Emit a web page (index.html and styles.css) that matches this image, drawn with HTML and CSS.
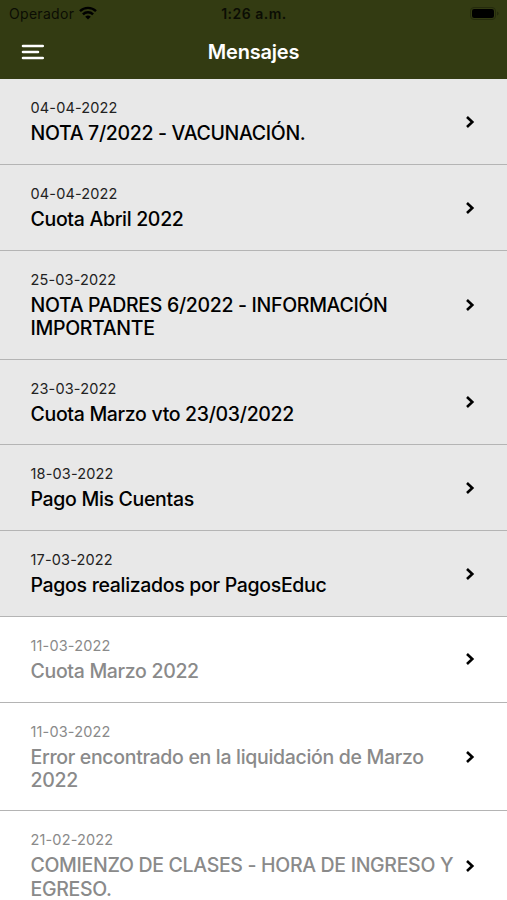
FILE: index.html
```html
<!DOCTYPE html>
<html lang="es">
  <head>
    <meta charset="UTF-8">
    <meta name="viewport" content="width=device-width, initial-scale=1">
    <title>Mensajes</title>
    <link rel="stylesheet" href="styles.css">
  </head>
  <body>
    <header class="header">
      <div class="status">
        <div class="carrier">
          <span class="carrier-name">Operador</span>
          <svg class="wifi" viewBox="0 0 18 14" width="18" height="14">
            <path d="M1 5.2 A11.3 11.3 0 0 1 17 5.2" />
            <path d="M3.9 8.3 A7.2 7.2 0 0 1 14.1 8.3" />
            <path class="dot" d="M9 13.6 L6.2 10.8 A4.2 4.2 0 0 1 11.8 10.8 Z" />
          </svg>
        </div>
        <span class="clock">1:26 a.m.</span>
        <svg class="battery" viewBox="0 0 29 13" width="29" height="13">
          <rect class="case" x="0.5" y="0.5" width="25" height="12" rx="3.5" />
          <rect x="2" y="2" width="22" height="9" rx="2.2" />
          <path class="cap" d="M27 4.5 Q28.6 5 28.6 6.5 Q28.6 8 27 8.5 Z" />
        </svg>
      </div>
      <div class="navbar">
        <svg class="menu" viewBox="0 0 23 16" width="23" height="16">
          <path d="M2 2 H21.8 M2 8 H17 M2 14 H21.8" />
        </svg>
        <h1 class="title">Mensajes</h1>
      </div>
    </header>
    <ul class="list">
      <li class="item">
        <div class="text"><p class="date">04-04-2022</p><p class="subject">NOTA 7/2022 - VACUNACIÓN.</p></div>
        <svg class="arrow" viewBox="0 0 10 14"><path d="M2 2 L7.3 7 L2 12" /></svg>
      </li>
      <li class="item">
        <div class="text"><p class="date">04-04-2022</p><p class="subject">Cuota Abril 2022</p></div>
        <svg class="arrow" viewBox="0 0 10 14"><path d="M2 2 L7.3 7 L2 12" /></svg>
      </li>
      <li class="item">
        <div class="text"><p class="date">25-03-2022</p><p class="subject">NOTA PADRES 6/2022 - INFORMACIÓN<br>IMPORTANTE</p></div>
        <svg class="arrow" viewBox="0 0 10 14"><path d="M2 2 L7.3 7 L2 12" /></svg>
      </li>
      <li class="item">
        <div class="text"><p class="date">23-03-2022</p><p class="subject">Cuota Marzo vto 23/03/2022</p></div>
        <svg class="arrow" viewBox="0 0 10 14"><path d="M2 2 L7.3 7 L2 12" /></svg>
      </li>
      <li class="item">
        <div class="text"><p class="date">18-03-2022</p><p class="subject">Pago Mis Cuentas</p></div>
        <svg class="arrow" viewBox="0 0 10 14"><path d="M2 2 L7.3 7 L2 12" /></svg>
      </li>
      <li class="item">
        <div class="text"><p class="date">17-03-2022</p><p class="subject">Pagos realizados por PagosEduc</p></div>
        <svg class="arrow" viewBox="0 0 10 14"><path d="M2 2 L7.3 7 L2 12" /></svg>
      </li>
      <li class="item read">
        <div class="text"><p class="date">11-03-2022</p><p class="subject">Cuota Marzo 2022</p></div>
        <svg class="arrow" viewBox="0 0 10 14"><path d="M2 2 L7.3 7 L2 12" /></svg>
      </li>
      <li class="item read">
        <div class="text"><p class="date">11-03-2022</p><p class="subject">Error encontrado en la liquidación de Marzo<br>2022</p></div>
        <svg class="arrow" viewBox="0 0 10 14"><path d="M2 2 L7.3 7 L2 12" /></svg>
      </li>
      <li class="item read">
        <div class="text"><p class="date">21-02-2022</p><p class="subject">COMIENZO DE CLASES - HORA DE INGRESO Y<br>EGRESO.</p></div>
        <svg class="arrow" viewBox="0 0 10 14"><path d="M2 2 L7.3 7 L2 12" /></svg>
      </li>
    </ul>
  </body>
</html>
```
FILE: styles.css
```css
body { margin: 0; height: 900px; overflow: hidden; background: #fff; font-family: Inter, "Liberation Sans", sans-serif; }
p, h1, ul { margin: 0; padding: 0; }

.header { height: 79px; background: #333b12; }
.status { display: grid; grid-template-columns: 1fr auto 1fr; align-items: center; height: 27px; padding: 0 8px 0 9px; color: #0b0d04; font-size: 14px; }
.carrier { display: flex; align-items: center; gap: 5px; }
.carrier-name { letter-spacing: 0.3px; }
.wifi { margin-bottom: 2px; }
.wifi path { fill: none; stroke: #000; stroke-width: 2.4; }
.wifi .dot { fill: #000; stroke: none; }
.clock { font-weight: 600; letter-spacing: 0.5px; }
.battery { justify-self: end; }
.battery .case { fill: none; stroke: #252b0d; }
.battery .cap { fill: #252b0d; }

.navbar { display: grid; grid-template-columns: 1fr auto 1fr; align-items: center; height: 50px; padding: 0 21px; }
.menu path { fill: none; stroke: #fff; stroke-width: 2.6; stroke-linecap: round; }
.title { color: #fff; font-size: 20px; font-weight: 600; letter-spacing: -0.2px; }

.list { list-style: none; }
.item { display: flex; align-items: center; justify-content: space-between; padding: 20px 32px 18.4px 30.5px; background: #e8e8e8; border-bottom: 1px solid #b4b4b4; color: #000; }
.item:first-child { padding-top: 20.4px; }
.text { white-space: nowrap; }
.date { font-size: 14.5px; line-height: 18px; letter-spacing: 0.15px; color: #222; }
.subject { padding-top: 5px; font-size: 19.5px; line-height: 23.3px; font-weight: 500; letter-spacing: -0.32px; }
.arrow { flex: none; width: 10px; height: 14px; margin-bottom: 1px; }
.arrow path { fill: none; stroke: #000; stroke-width: 2.6; }
.read { background: #fff; }
.read .date, .read .subject { color: #8a8a8a; }
```
